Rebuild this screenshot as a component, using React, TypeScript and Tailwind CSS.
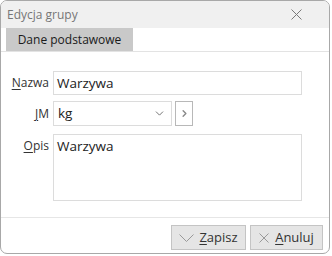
import { ChevronDown, ChevronRight } from "lucide-react";

const font = { fontFamily: '"Open Sans", "Noto Sans", sans-serif' };

const Cross: React.FC<{ size: number; className?: string }> = ({ size, className }) => (
  <svg width={size} height={size} viewBox={`0 0 ${size} ${size}`} className={className}>
    <path d={`M0.5 0.5 L${size - 0.5} ${size - 0.5} M${size - 0.5} 0.5 L0.5 ${size - 0.5}`} stroke="currentColor" strokeWidth="1" fill="none" />
  </svg>
);

const Label: React.FC<{ first: string; rest: string; className?: string }> = ({
  first,
  rest,
  className = "",
}) => (
  <span className={`w-[48px] shrink-0 text-right text-[12px] text-[#333] ${className}`}>
    <span className="underline underline-offset-2">{first}</span>
    {rest}
  </span>
);

export default function App() {
  return (
    <div className="w-[332px] h-[256px] bg-white" style={font}>
      <div className="w-[330px] h-[254px] flex flex-col border border-[#a8a8a8] rounded-[7px] overflow-hidden bg-white">
        {/* title bar */}
        <div className="h-[27px] shrink-0 flex items-center justify-between bg-[#f0f0f0] pl-[6px] pr-[27px]">
          <span className="text-[12px] text-[#767676]">Edycja grupy</span>
          <Cross size={11} className="text-[#7a7a7a]" />
        </div>

        {/* tabs */}
        <div className="h-[24px] shrink-0 flex border-b border-[#e3e3e3] pl-[5px]">
          <div className="w-[127px] h-[23px] flex items-center justify-center bg-[#c9c9c9] text-[12px] text-[#1a1a1a]">
            Dane podstawowe
          </div>
        </div>

        {/* form */}
        <div className="flex-1 flex flex-col gap-[6px] pt-[19px] pl-0 pr-[27px]">
          <div className="flex items-center gap-[4px]">
            <Label first="N" rest="azwa" />
            <div className="flex-1 h-[24px] flex items-center border border-[#dcdcdc] px-[3px] text-[13.5px] text-[#222]">
              Warzywa
            </div>
          </div>
          <div className="flex items-center gap-[4px]">
            <Label first="J" rest="M" />
            <div className="w-[119px] h-[25px] flex items-center justify-between border border-[#dcdcdc] pl-[4px] pr-[5px] text-[13.5px] text-[#222]">
              kg
              <ChevronDown size={13} strokeWidth={1.5} className="text-[#555]" />
            </div>
            <div className="w-[18px] h-[25px] ml-[-1px] flex items-center justify-center border border-[#b8b8b8]">
              <ChevronRight size={11} strokeWidth={3} className="text-[#888]" />
            </div>
          </div>
          <div className="flex items-start gap-[4px] mt-[2px]">
            <Label first="O" rest="pis" className="pt-[3px]" />
            <div className="flex-1 h-[67px] border border-[#dcdcdc] px-[3px] pt-[1px] text-[13.5px] text-[#222]">
              Warzywa
            </div>
          </div>
        </div>

        {/* footer */}
        <div className="h-[36px] shrink-0 flex items-center justify-end gap-[4px] border-t border-[#e6e6e6] pr-[6px] pt-[4px]">
          <button className="w-[75px] h-[25px] flex items-center justify-center gap-[5px] bg-[#e5e5e5] border border-[#c4c4c4] text-[13px] text-[#333]">
            <svg width="15" height="8" viewBox="0 0 15 8" className="text-[#999]">
              <path d="M0.5 0.5 L7.5 7.5 L14.5 0.5" stroke="currentColor" strokeWidth="1" fill="none" />
            </svg>
            <span>
              <span className="underline underline-offset-2">Z</span>apisz
            </span>
          </button>
          <button className="w-[73px] h-[25px] flex items-center justify-center gap-[6px] bg-[#e5e5e5] border border-[#c4c4c4] text-[13px] text-[#333]">
            <Cross size={10} className="text-[#999]" />
            <span>
              <span className="underline underline-offset-2">A</span>nuluj
            </span>
          </button>
        </div>
      </div>
    </div>
  );
}
